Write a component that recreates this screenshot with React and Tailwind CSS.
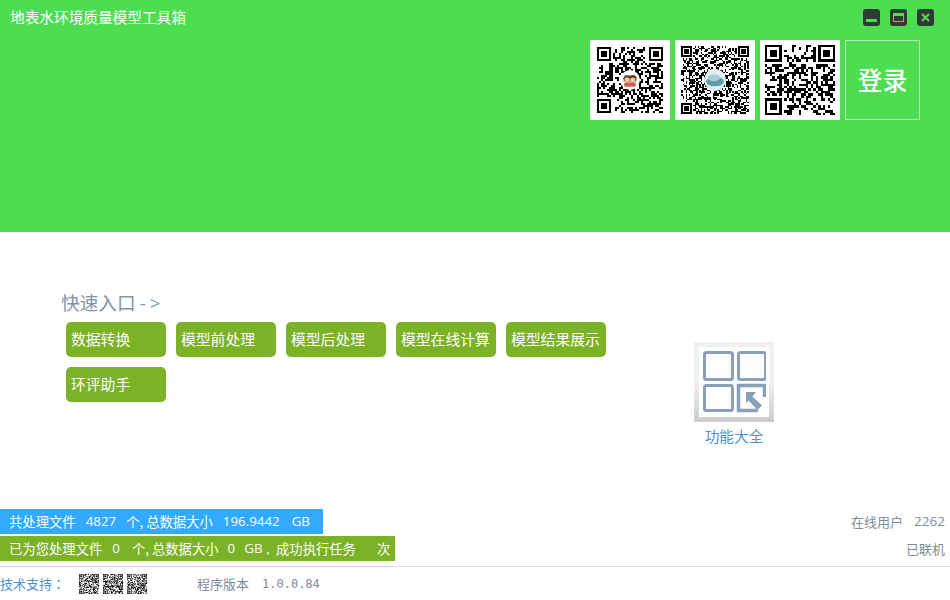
import React from 'react';

const cjk = { fontFamily: '"Noto Sans CJK SC", sans-serif' };
const latin = { fontFamily: '"Open Sans", sans-serif' };

// deterministic fake QR matrix, same picture on every render
const makeQr = (size, seed) => {
  let s = seed;
  const next = () => {
    s = (s * 1664525 + 1013904223) % 4294967296;
    return s / 4294967296;
  };
  const cells = [];
  const inFinder = (x, y) =>
    (x < 8 && y < 8) || (x >= size - 8 && y < 8) || (x < 8 && y >= size - 8);
  for (let y = 0; y < size; y++) {
    for (let x = 0; x < size; x++) {
      if (!inFinder(x, y) && next() > 0.52) cells.push([x, y]);
    }
  }
  return cells;
};

const Finder = ({ x, y }) => (
  <g>
    <rect x={x + 0.5} y={y + 0.5} width="6" height="6" fill="none" stroke="#000" strokeWidth="1" />
    <rect x={x + 2} y={y + 2} width="3" height="3" fill="#000" />
  </g>
);

const QrCode = ({ size = 33, seed = 1, className, badge, blur }) => {
  const cells = makeQr(size, seed);
  const mid = size / 2;
  return (
    <svg viewBox={`0 0 ${size} ${size}`} className={className} shapeRendering={blur ? 'auto' : 'crispEdges'}>
      <path d={cells.map(([x, y]) => `M${x} ${y}h1v1h-1z`).join('')} fill="#000" />
      <Finder x={0} y={0} />
      <Finder x={size - 7} y={0} />
      <Finder x={0} y={size - 7} />
      {badge === 'kids' && (
        <g shapeRendering="auto">
          <circle cx={mid} cy={mid} r={size * 0.15} fill="#fff" />
          <circle cx={mid - 1.4} cy={mid - 0.6} r="1.9" fill="#7a4a32" />
          <circle cx={mid + 1.4} cy={mid - 0.6} r="1.9" fill="#5a3526" />
          <circle cx={mid - 1.4} cy={mid} r="1.3" fill="#f3c6a8" />
          <circle cx={mid + 1.4} cy={mid} r="1.3" fill="#f3c6a8" />
          <rect x={mid - 3} y={mid + 1.2} width="6" height="2.2" rx="1" fill="#c9605a" />
        </g>
      )}
      {badge === 'lake' && (
        <g shapeRendering="auto">
          <circle cx={mid} cy={mid} r={size * 0.16} fill="#dfeef0" />
          <ellipse cx={mid} cy={mid + 1} rx={size * 0.13} ry={size * 0.07} fill="#5f9bab" />
          <ellipse cx={mid - 0.8} cy={mid - 1.4} rx={size * 0.09} ry={size * 0.05} fill="#a8cdd6" />
        </g>
      )}
    </svg>
  );
};

const WinButton = ({ children }) => (
  <button className="w-[17px] h-[17px] rounded-[3px] bg-[#2f3a35] flex items-center justify-center">
    {children}
  </button>
);

const entries = ['数据转换', '模型前处理', '模型后处理', '模型在线计算', '模型结果展示', '环评助手'];

const App = () => {
  return (
    <div className="w-[950px] h-[600px] bg-white flex flex-col overflow-hidden" style={cjk}>
      {/* header */}
      <div className="h-[232px] bg-[#4cdd50] flex flex-col shrink-0">
        <div className="flex justify-between pl-[10px] pr-[16px] pt-[9px] h-[40px]">
          <span className="text-white text-[14.67px] leading-[16px]">地表水环境质量模型工具箱</span>
          <div className="flex gap-[10px] h-[17px]">
            <WinButton>
              <div className="w-[11px] h-[3px] bg-[#4cdd50] mt-[6px]" />
            </WinButton>
            <WinButton>
              <div className="w-[11px] h-[9px] border border-t-[3px] border-[#4cdd50]" />
            </WinButton>
            <WinButton>
              <svg viewBox="0 0 9 9" className="w-[9px] h-[9px]">
                <path d="M1 1l7 7M8 1l-7 7" stroke="#4cdd50" strokeWidth="2" />
              </svg>
            </WinButton>
          </div>
        </div>
        <div className="flex justify-end gap-[5px] pr-[30px]">
          <div className="w-[80px] h-[80px] bg-white p-[7px]">
            <QrCode size={33} seed={11} badge="kids" className="w-full h-full" />
          </div>
          <div className="w-[80px] h-[80px] bg-white p-[6px]">
            <QrCode size={45} seed={27} badge="lake" className="w-full h-full" />
          </div>
          <div className="w-[80px] h-[80px] bg-white p-[5px]">
            <QrCode size={29} seed={53} className="w-full h-full" />
          </div>
          <button className="w-[75px] h-[80px] border border-[#b5efb6] text-white text-[25px] font-medium">登录</button>
        </div>
      </div>

      {/* main */}
      <div className="h-[276px] shrink-0 flex">
        <div className="w-[694px] pl-[61px] pt-[58px] shrink-0">
          <div className="text-[#8492a6] text-[18.67px] leading-[24px] whitespace-pre">
            快速入口 <span className="tracking-[4px]" style={latin}>-&gt;</span>
          </div>
          <div className="flex flex-wrap gap-[10px] pl-[5px] pt-[7px] w-[560px]">
            {entries.map((name) => (
              <button
                key={name}
                className="w-[100px] h-[35px] rounded-[5px] bg-[#7bb226] text-white text-[14.8px] text-left pl-[5px]"
              >
                {name}
              </button>
            ))}
          </div>
        </div>
        <div className="w-[80px] pt-[110px] flex flex-col items-center">
          <div className="w-[80px] h-[80px] p-[5px] bg-gradient-to-b from-[#f1f1f1] from-50% to-[#cccccc]">
            <div className="w-full h-full bg-white flex items-center justify-center">
              <svg viewBox="0 0 64 64" className="w-[64px] h-[64px] shrink-0" fill="none" stroke="#8a9fb8" strokeWidth="3">
                <rect x="2.5" y="2.5" width="28" height="27" rx="2" />
                <rect x="36.5" y="2.5" width="27" height="27" rx="2" />
                <rect x="2.5" y="35.5" width="28" height="25" rx="2" />
                <path d="M62.5 47V35.5H36.5V60.5H56" strokeWidth="3.5" />
                <path d="M44 42H54L50.5 46.5L60 55.5L55.5 60L46.5 50.5L44 53Z" fill="#8a9fb8" stroke="none" />
              </svg>
            </div>
          </div>
          <span className="text-[#4a90d9] text-[14.67px] leading-[20px] mt-[4px]">功能大全</span>
        </div>
      </div>

      {/* status */}
      <div className="flex justify-between items-start">
        <div className="flex flex-col gap-[2px] mt-[1px] text-white text-[13.33px] whitespace-pre">
          <div className="w-[323px] h-[25px] bg-[#33a9ff] pl-[9px] flex items-center">
            <span>共处理文件</span>
            <span className="ml-[10px]" style={latin}>4827</span>
            <span className="ml-[10px]">个, 总数据大小</span>
            <span className="ml-[10px]" style={latin}>196.9442</span>
            <span className="ml-[12px]" style={latin}>GB</span>
          </div>
          <div className="w-[395px] h-[25px] bg-[#7bb226] pl-[9px] flex items-center">
            <span>已为您处理文件</span>
            <span className="ml-[10px]" style={latin}>0</span>
            <span className="ml-[12px]">个, 总数据大小</span>
            <span className="ml-[9px]" style={latin}>0</span>
            <span className="ml-[9px]" style={latin}>GB</span>
            <span className="ml-[4px]" style={latin}>,</span>
            <span className="ml-[6px]">成功执行任务</span>
            <span className="ml-[21px]">次</span>
          </div>
        </div>
        <div className="flex flex-col items-end pr-[5px] text-[13px] text-[#808b96] leading-[27px]">
          <div className="flex">
            <span>在线用户</span>
            <span className="ml-[11px] text-[13.5px]" style={latin}>2262</span>
          </div>
          <span>已联机</span>
        </div>
      </div>

      {/* footer */}
      <div className="mt-[4px] border-t border-[#dddddd] flex items-center h-[34px] text-[13px] shrink-0">
        <span className="text-[#4a90d9] w-[79px]" style={{ fontFamily: '"Noto Sans CJK TC", sans-serif' }}>技术支持：</span>
        <div className="flex gap-[4px]">
          <QrCode size={30} seed={3} blur className="w-[20px] h-[20px]" />
          <QrCode size={30} seed={8} blur className="w-[20px] h-[20px]" />
          <QrCode size={30} seed={5} blur className="w-[20px] h-[20px]" />
        </div>
        <span className="text-[#808b96] ml-[50px]">程序版本</span>
        <span className="text-[#808b96] ml-[13px] text-[12px]" style={{ fontFamily: '"DejaVu Sans Mono", monospace' }}>
          1.0.0.84
        </span>
      </div>
    </div>
  );
};

export default App;
